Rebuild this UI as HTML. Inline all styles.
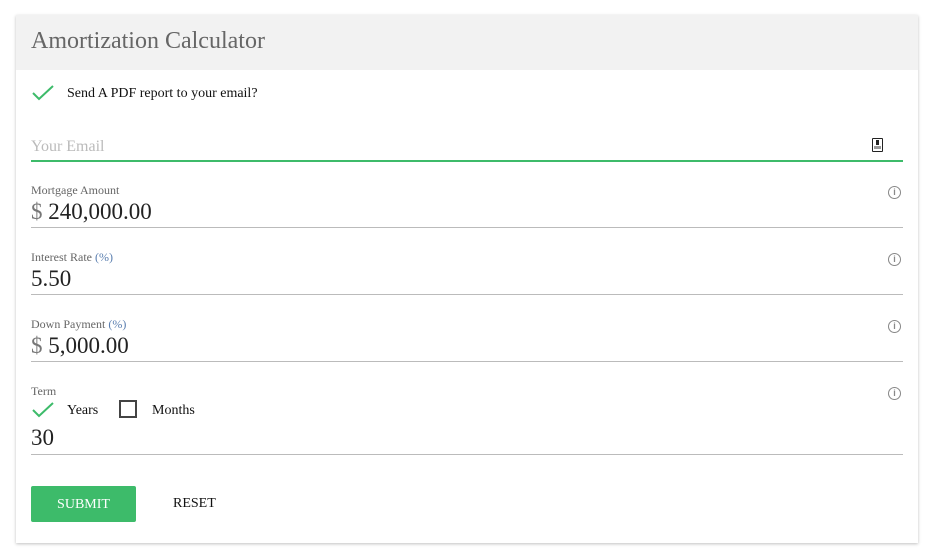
<!DOCTYPE html>
<html><head><style>
body{margin:0;background:#fff;font-family:"Liberation Serif",serif;}
.card{position:absolute;left:16px;top:15px;width:902px;height:528px;background:#fff;box-shadow:0 1px 3px rgba(0,0,0,.25);}
.hdr{position:absolute;left:0;top:0;width:902px;height:55px;background:#f2f2f2;}
.hdr span{position:absolute;left:15px;top:13px;font-size:24px;color:#666;}
.abs{position:absolute;}
.lbl{font-size:12px;color:#666;}
.val{font-size:23px;color:#222;}
.line{position:absolute;left:15px;width:872px;height:1px;background:#bbb;}
.info{position:absolute;left:872px;width:11px;height:11px;border:1.3px solid #888;border-radius:50%;font-size:9px;color:#888;text-align:center;line-height:11px;font-family:"Liberation Sans",sans-serif;font-weight:bold;}
</style></head><body>
<div class="card">
<div class="hdr"><span>Amortization Calculator</span></div>
<svg class="abs" style="left:15px;top:69px" width="24" height="18"><path d="M2 9 L8 15 L22 2" stroke="#3dbb6a" stroke-width="2" fill="none"/></svg>
<div class="abs" style="left:51px;top:71px;font-size:14px;color:#111">Send A PDF report to your email?</div>
<div class="abs" style="left:15px;top:123px;font-size:16px;color:#bbb">Your Email</div>
<div class="abs" style="left:856px;top:123px;width:9px;height:12px;border:1.5px solid #222;border-radius:1px"><div style="position:absolute;left:3px;top:1px;width:3px;height:5px;background:#222"></div><div style="position:absolute;left:1px;top:7px;width:7px;height:3px;background:#999"></div></div>
<div class="line" style="top:145px;height:2px;background:#3dbb6a"></div>

<div class="abs lbl" style="left:15px;top:168px">Mortgage Amount</div>
<div class="abs val" style="left:15px;top:184px"><span style="color:#777">$</span> 240,000.00</div>
<div class="info" style="top:171px">i</div>
<div class="line" style="top:212px"></div>

<div class="abs lbl" style="left:15px;top:235px">Interest Rate <span style="color:#5b7fb0">(%)</span></div>
<div class="abs val" style="left:15px;top:251px">5.50</div>
<div class="info" style="top:238px">i</div>
<div class="line" style="top:279px"></div>

<div class="abs lbl" style="left:15px;top:302px">Down Payment <span style="color:#5b7fb0">(%)</span></div>
<div class="abs val" style="left:15px;top:318px"><span style="color:#777">$</span> 5,000.00</div>
<div class="info" style="top:305px">i</div>
<div class="line" style="top:346px"></div>

<div class="abs lbl" style="left:15px;top:369px">Term</div>
<svg class="abs" style="left:15px;top:386px" width="24" height="18"><path d="M2 9 L8 15 L22 2" stroke="#3dbb6a" stroke-width="2" fill="none"/></svg>
<div class="abs" style="left:51px;top:388px;font-size:14px;color:#111">Years</div>
<div class="abs" style="left:103px;top:385px;width:14px;height:14px;border:2px solid #444"></div>
<div class="abs" style="left:136px;top:388px;font-size:14px;color:#111">Months</div>
<div class="info" style="top:372px">i</div>
<div class="abs val" style="left:15px;top:410px">30</div>
<div class="line" style="top:439px"></div>

<div class="abs" style="left:15px;top:471px;width:105px;height:36px;background:#3dbb6a;border-radius:2px;color:#fff;font-size:14px;text-align:center;line-height:37px">SUBMIT</div>
<div class="abs" style="left:157px;top:481px;font-size:14px;color:#111">RESET</div>
</div>
</body></html>
